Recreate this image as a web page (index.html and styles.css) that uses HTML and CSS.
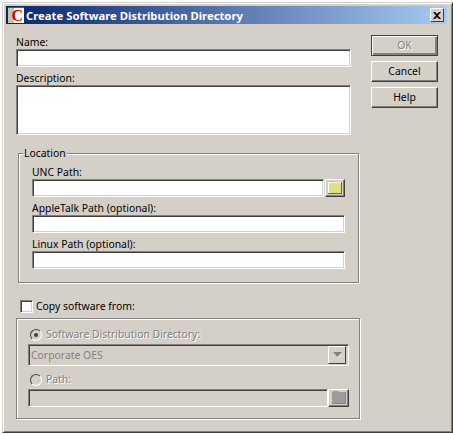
FILE: index.html
```html
<!DOCTYPE html>
<html lang="en">
<head>
  <meta charset="UTF-8" />
  <title>Create Software Distribution Directory</title>
  <link rel="stylesheet" href="styles.css">
</head>
<body>
  <div class="window">
    <div class="titlebar">
      <span class="app-icon"><span class="app-letter">C</span></span>
      <span class="title">Create Software Distribution Directory</span>
      <button class="close" type="button">
        <svg width="8" height="7" viewBox="0 0 8 7"><path d="M0 0h2l2 2 2-2h2L5 3.500 8 7H6L4 5 2 7H0l3-3.500z" fill="#000"/></svg>
      </button>
    </div>

    <div class="content">
      <div class="form">
        <label class="label">Name:</label>
        <input class="field name-field" type="text" />
        <label class="label description-label">Description:</label>
        <textarea class="field description-field"></textarea>

        <fieldset class="group location">
          <legend>Location</legend>
          <div class="location-body">
            <label class="label">UNC Path:</label>
            <div class="path-row">
              <input class="field unc-field" type="text" />
              <button class="browse" type="button">
                <svg width="16" height="14" viewBox="0 0 16 14">
                  <path d="M2 0h6v1H2z" fill="#c8c870"/>
                  <path d="M1 1h13v1H1z" fill="#f4f4e0"/>
                  <path d="M1 2h1v10H1z" fill="#fff"/>
                  <path d="M2 2h12v10H2z" fill="#e0e07c"/>
                  <path d="M14 1h1v12H1v-1h13z" fill="#60608c"/>
                </svg>
              </button>
            </div>
            <label class="label row-label">AppleTalk Path (optional):</label>
            <input class="field path-field" type="text" />
            <label class="label row-label">Linux Path (optional):</label>
            <input class="field path-field" type="text" />
          </div>
        </fieldset>

        <div class="check-row">
          <span class="checkbox"></span>
          <span class="label">Copy software from:</span>
        </div>

        <div class="group copy-from">
          <div class="radio-row">
            <span class="radio selected"></span>
            <span class="disabled-label">Software Distribution Directory:</span>
          </div>
          <div class="field combo">
            <span class="combo-text">Corporate OES</span>
            <span class="combo-arrow">
              <svg width="9" height="6" viewBox="0 0 9 6">
                <path d="M0 0h9L4.500 5z" fill="#808080"/>
                <path d="M8 2h1L5 6H4z" fill="#fff"/>
              </svg>
            </span>
          </div>
          <div class="radio-row path-radio">
            <span class="radio"></span>
            <span class="disabled-label">Path:</span>
          </div>
          <div class="path-row">
            <input class="field copy-field" type="text" disabled />
            <button class="browse browse-off" type="button" disabled>
              <svg width="16" height="14" viewBox="0 0 16 14">
                <path d="M2 0h6v1H2z" fill="#a0a0a0"/>
                <path d="M1 1h14v12H1z" fill="#9c9c9c"/>
                <path d="M14 1h1v12H1v-1h13z" fill="#848484"/>
              </svg>
            </button>
          </div>
        </div>
      </div>

      <div class="actions">
        <button class="action default" type="button" disabled>OK</button>
        <button class="action" type="button">Cancel</button>
        <button class="action" type="button">Help</button>
      </div>
    </div>
  </div>
</body>
</html>
```

FILE: styles.css
```css
:root {
  --face: #d4d0c8;
  --shade: #808080;
  --dark: #404040;
}
html, body {
  margin: 0;
  padding: 0;
  background: #fff;
}
body {
  padding: 2px 0 0 2px;
  height: 434px;
  box-sizing: border-box;
  overflow: hidden;
}
button, input, textarea {
  font: inherit;
  margin: 0;
}
.window {
  width: 451px;
  height: 431px;
  box-sizing: border-box;
  padding: 3px 2px 1px 3px;
  background: var(--face);
  border: 1px solid;
  border-color: var(--face) var(--dark) var(--dark) var(--face);
  box-shadow: inset 1px 1px 0 #fff, inset -1px -1px 0 var(--shade);
  font-family: "Noto Sans", sans-serif;
  font-size: 10.4px;
  color: #000;
}

/* Title bar */
.titlebar {
  display: flex;
  align-items: center;
  height: 18px;
  width: 441px;
  padding-left: 2px;
  box-sizing: border-box;
  background: linear-gradient(90deg, #0a246a, #a6caf0);
}
.app-icon {
  display: flex;
  justify-content: flex-end;
  width: 16px;
  height: 16px;
  padding-right: 1px;
  background: linear-gradient(90deg, #c8c4ac 35%, #fff 35%);
  border-top: 1px solid #d02020;
  box-sizing: border-box;
}
.app-letter {
  font: bold 16px/15px "Liberation Serif", serif;
  color: #e00000;
}
.title {
  margin-left: 2px;
  font-weight: bold;
  font-size: 11.3px;
  color: #fff;
  white-space: nowrap;
}
.close {
  display: flex;
  align-items: center;
  justify-content: center;
  margin-left: auto;
  margin-right: 3px;
  width: 14px;
  height: 14px;
  padding: 0;
  background: var(--face);
  border: 1px solid;
  border-color: #fff var(--dark) var(--dark) #fff;
}

/* Dialog body */
.content {
  display: flex;
}
.form {
  width: 344px;
  margin-left: 10px;
  padding-top: 12px;
}
.label {
  display: block;
  height: 13px;
  line-height: 12px;
  white-space: nowrap;
}
.description-label {
  margin-top: 5px;
}
.row-label {
  margin-top: 5px;
}
.field {
  display: block;
  box-sizing: border-box;
  height: 18px;
  padding: 0;
  background: #fff;
  border: 1px solid;
  border-color: var(--shade) #fff #fff var(--shade);
  box-shadow: inset 1px 1px 0 var(--dark), inset -1px -1px 0 var(--face);
  resize: none;
  outline: none;
}
.name-field {
  width: 335px;
}
.description-field {
  width: 335px;
  height: 50px;
}

/* Etched groups */
.group {
  box-sizing: border-box;
  border: 1px solid var(--shade);
  box-shadow: 1px 1px 0 #fff, inset 1px 1px 0 #fff;
}
.location {
  width: 340px;
  margin: 12px 0 0 2px;
  padding: 0;
}
.location legend {
  margin-left: 4px;
  padding: 0 1px;
  height: 13px;
  line-height: 12px;
  background: var(--face);
}
.location-body {
  padding: 6px 13px 13px;
}
.path-row {
  display: flex;
}
.unc-field {
  width: 292px;
}
.path-field {
  width: 313px;
}
.browse {
  display: flex;
  align-items: center;
  justify-content: center;
  width: 20px;
  height: 18px;
  margin-left: 1px;
  padding: 0;
  background: var(--face);
  border: 1px solid;
  border-color: #fff var(--dark) var(--dark) #fff;
  box-shadow: inset -1px -1px 0 var(--shade);
}

/* Copy from */
.check-row {
  display: flex;
  align-items: center;
  gap: 3px;
  margin: 17px 0 5px 4px;
}
.checkbox {
  box-sizing: border-box;
  width: 13px;
  height: 13px;
  background: #fff;
  border: 1px solid;
  border-color: var(--shade) #fff #fff var(--shade);
  box-shadow: inset 1px 1px 0 var(--dark), inset -1px -1px 0 var(--face);
}
.copy-from {
  width: 344px;
  height: 101px;
  padding: 9px 10px 0 11px;
}
.radio-row {
  display: flex;
  align-items: center;
  gap: 4px;
  height: 13px;
  margin: 0 0 3px 2px;
}
.path-radio {
  margin-top: 7px;
}
.radio {
  position: relative;
  box-sizing: border-box;
  width: 12px;
  height: 12px;
  border-radius: 50%;
  border: 1px solid;
  border-color: var(--dark) #fff #fff var(--dark);
  background: var(--face);
}
.radio.selected::after {
  content: "";
  position: absolute;
  top: 3px;
  left: 3px;
  width: 4px;
  height: 4px;
  border-radius: 50%;
  background: var(--dark);
}
.disabled-label {
  padding-bottom: 2px;
  color: var(--shade);
  text-shadow: 1px 1px 0 #fff;
  white-space: nowrap;
}
.combo {
  display: flex;
  align-items: center;
  justify-content: space-between;
  width: 321px;
  height: 22px;
  padding: 2px;
  background: var(--face);
}
.combo-text {
  color: var(--shade);
}
.combo-arrow {
  display: flex;
  align-items: center;
  justify-content: center;
  box-sizing: border-box;
  width: 18px;
  height: 18px;
  border: 1px solid;
  border-color: #fff var(--dark) var(--dark) #fff;
}
.copy-field {
  width: 300px;
  background: var(--face);
}
.browse-off {
  width: 21px;
  margin-left: 0;
}

/* Buttons on the right */
.actions {
  display: flex;
  flex-direction: column;
  gap: 5px;
  margin-left: 11px;
  padding-top: 11px;
}
.action {
  box-sizing: border-box;
  width: 67px;
  height: 21px;
  padding: 0 0 2px;
  background: var(--face);
  border: 1px solid;
  border-color: #fff var(--dark) var(--dark) #fff;
  box-shadow: inset -1px -1px 0 var(--shade);
  color: #000;
}
.action.default {
  color: var(--shade);
  outline: 1px solid var(--dark);
  outline-offset: -1px;
  box-shadow: inset 1px 1px 0 #fff, inset -2px -2px 0 var(--shade);
  text-shadow: 1px 1px 0 #fff;
}
```
